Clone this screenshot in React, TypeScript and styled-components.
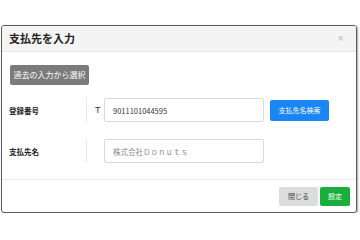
import React from 'react'
import styled, { createGlobalStyle } from 'styled-components'

const GlobalStyle = createGlobalStyle`
  body {
    margin: 0;
    background: #ffffff;
    font-family: "Noto Sans CJK JP", "Liberation Sans", sans-serif;
  }
`

const Modal = styled.div`
  margin: 25px 0 0 1px;
  width: 356px;
  height: 188px;
  box-sizing: border-box;
  border: 1px solid #5a5a5a;
  border-radius: 3px;
  box-shadow: 1px 1px 2px rgba(0, 0, 0, 0.35);
  display: flex;
  flex-direction: column;
  overflow: hidden;
`

const Header = styled.div`
  height: 25px;
  background: #f4f4f4;
  border-bottom: 1px solid #e6e6e6;
  display: flex;
  align-items: center;
  justify-content: space-between;
  padding: 0 12px 0 7px;
  flex-shrink: 0;
`

const Title = styled.div`
  font-size: 11px;
  font-weight: 700;
  line-height: 1;
  color: #222;
`

const Close = styled.span`
  font-family: "Liberation Sans", sans-serif;
  font-size: 11px;
  line-height: 1;
  color: #b8b8b8;
`

const Body = styled.div`
  flex: 1;
  padding: 13px 8px 0 7px;
  border-bottom: 1px solid #ececec;
`

const HistoryButton = styled.div`
  display: flex;
  align-items: center;
  justify-content: center;
  width: 79px;
  height: 20px;
  margin-left: 1px;
  background: #7b7b7b;
  border-radius: 2px;
  color: #fff;
  font-size: 8px;
  line-height: 1;
`

const Row = styled.div<{ top: number }>`
  display: flex;
  align-items: center;
  height: 24px;
  margin-top: ${(p) => p.top}px;
`

const Label = styled.div`
  width: 77px;
  font-size: 7.5px;
  font-weight: 700;
  color: #222;
`

const Divider = styled.div`
  width: 1px;
  align-self: stretch;
  background: #e8e8e8;
`

const Prefix = styled.div`
  width: 17px;
  box-sizing: border-box;
  padding-left: 8px;
  font-family: "Liberation Sans", sans-serif;
  font-size: 9px;
  color: #333;
`

const Input = styled.div<{ placeholder?: boolean }>`
  width: 160px;
  height: 24px;
  box-sizing: border-box;
  border: 1px solid #d9d9d9;
  border-radius: 2px;
  display: flex;
  align-items: center;
  padding-left: 8px;
  font-size: 7.5px;
  color: ${(p) => (p.placeholder ? '#8a8a8a' : '#333')};
`

const SearchButton = styled.div`
  margin-left: 6px;
  width: 59px;
  height: 21px;
  background: #1a86f5;
  border-radius: 2px;
  color: #fff;
  font-size: 7px;
  display: flex;
  align-items: center;
  justify-content: center;
`

const Footer = styled.div`
  height: 32px;
  display: flex;
  align-items: center;
  justify-content: flex-end;
  gap: 2px;
  padding-right: 6px;
  flex-shrink: 0;
`

const FooterButton = styled.div<{ primary?: boolean }>`
  height: 19px;
  padding: 0 ${(p) => (p.primary ? 8 : 9)}px;
  border-radius: 2px;
  display: flex;
  align-items: center;
  font-size: 7px;
  background: ${(p) => (p.primary ? '#1aae3c' : '#dcdcdc')};
  color: ${(p) => (p.primary ? '#fff' : '#444')};
`

export default function App() {
  return (
    <>
      <GlobalStyle />
      <Modal>
        <Header>
          <Title>支払先を入力</Title>
          <Close>×</Close>
        </Header>
        <Body>
          <HistoryButton>過去の入力から選択</HistoryButton>
          <Row top={13}>
            <Label>登録番号</Label>
            <Divider />
            <Prefix>T</Prefix>
            <Input>9011101044595</Input>
            <SearchButton>支払先名検索</SearchButton>
          </Row>
          <Row top={17}>
            <Label>支払先名</Label>
            <Divider />
            <Prefix />
            <Input placeholder>株式会社Ｄｏｎｕｔｓ</Input>
          </Row>
        </Body>
        <Footer>
          <FooterButton>閉じる</FooterButton>
          <FooterButton primary>設定</FooterButton>
        </Footer>
      </Modal>
    </>
  )
}
